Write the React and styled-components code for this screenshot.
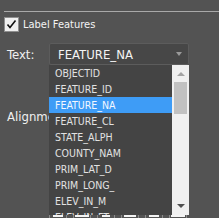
import React from 'react';
import styled, { createGlobalStyle } from 'styled-components';

const GlobalStyle = createGlobalStyle`
  html, body {
    margin: 0;
    padding: 0;
    background: #535353;
    overflow: hidden;
  }
`;

const fields = [
  'OBJECTID',
  'FEATURE_ID',
  'FEATURE_NA',
  'FEATURE_CL',
  'STATE_ALPH',
  'COUNTY_NAM',
  'PRIM_LAT_D',
  'PRIM_LONG_',
  'ELEV_IN_M',
  'ELEV_IN_FT'
];

const Panel = styled.div`
  width: 219px;
  height: 218px;
  padding-top: 11px;
  box-sizing: border-box;
  font-family: 'DejaVu Sans Condensed', 'DejaVu Sans', sans-serif;
  color: #f2f2f2;
  overflow: hidden;
`;

const Divider = styled.div`
  height: 1px;
  margin-left: 4px;
  background: #a9a9a9;
`;

const CheckRow = styled.label`
  display: flex;
  align-items: center;
  gap: 4px;
  margin: 5px 0 0 4px;
  font-size: 11px;
  color: #f4f4f4;
`;

const CheckBox = styled.span`
  width: 13px;
  height: 13px;
  border: 1px solid #8f8f8f;
  background: #f0f0f0;
  display: flex;
  align-items: center;
  justify-content: center;
`;

const FieldRow = styled.div`
  display: flex;
  align-items: center;
  margin-top: 11px;
`;

const FieldLabel = styled.span`
  width: 42px;
  padding-left: 7px;
  font-size: 13px;
  color: #f0f0f0;
`;

const SelectWrap = styled.div`
  position: relative;
  width: 140px;
`;

const SelectBox = styled.div`
  height: 20px;
  border: 1px solid #5c5c5c;
  border-radius: 2px;
  background: #474747;
  display: flex;
  align-items: center;
  justify-content: space-between;
  padding: 0 6px 0 8px;
  font-size: 13px;
  color: #f4f4f4;
`;

const Caret = styled.span`
  width: 0;
  height: 0;
  border-left: 3.5px solid transparent;
  border-right: 3.5px solid transparent;
  border-top: 4px solid #9a9a9a;
`;

const Dropdown = styled.div`
  position: absolute;
  top: 22px;
  left: 0;
  width: 140px;
  height: 150px;
  display: flex;
  background: #444444;
  z-index: 5;
`;

const List = styled.div`
  flex: 1;
  overflow: hidden;
`;

const Item = styled.div`
  height: 16px;
  line-height: 16px;
  padding-left: 6px;
  font-size: 10.5px;
  color: ${({ $active }) => ($active ? '#f4f8ff' : '#e2e2e2')};
  background: ${({ $active }) => ($active ? '#3e9cf6' : 'transparent')};
  white-space: nowrap;
`;

const ScrollBar = styled.div`
  width: 17px;
  background: #f0f0f0;
  display: flex;
  flex-direction: column;
  align-items: center;
`;

const ArrowUp = styled.span`
  margin-top: 7px;
  width: 0;
  height: 0;
  border-left: 4px solid transparent;
  border-right: 4px solid transparent;
  border-bottom: 4px solid #a3a3a3;
`;

const Thumb = styled.div`
  width: 13px;
  height: 32px;
  margin-top: 6px;
  background: #c1c1c1;
`;

const ArrowDown = styled.span`
  margin-top: auto;
  margin-bottom: 7px;
  width: 0;
  height: 0;
  border-left: 4px solid transparent;
  border-right: 4px solid transparent;
  border-top: 4px solid #505050;
`;

const AlignRow = styled.div`
  margin-top: 44px;
  padding-left: 7px;
  font-size: 13px;
  color: #f0f0f0;
`;

const IconRow = styled.div`
  display: flex;
  gap: 6px;
  margin: 86px 0 0 49px;
`;

const IconButton = styled.div`
  width: 18px;
  height: 18px;
  border: 1px solid #8a8a8a;
  display: flex;
  justify-content: center;
  padding-top: 3px;
  box-sizing: border-box;
`;

const IconBar = styled.span`
  width: ${({ $w }) => $w}px;
  height: 3px;
  background: #f4f4f4;
`;

export default function App() {
  return (
    <Panel>
      <GlobalStyle />
      <Divider />
      <CheckRow>
        <CheckBox>
          <svg width="11" height="11" viewBox="0 0 11 11">
            <path d="M1.5 5.5 L4 8.5 L9.5 1.5" fill="none" stroke="#111" strokeWidth="1.6" />
          </svg>
        </CheckBox>
        Label Features
      </CheckRow>
      <FieldRow>
        <FieldLabel>Text:</FieldLabel>
        <SelectWrap>
          <SelectBox>
            FEATURE_NA
            <Caret />
          </SelectBox>
          <Dropdown>
            <List>
              {fields.map((f) => (
                <Item key={f} $active={f === 'FEATURE_NA'}>
                  {f}
                </Item>
              ))}
            </List>
            <ScrollBar>
              <ArrowUp />
              <Thumb />
              <ArrowDown />
            </ScrollBar>
          </Dropdown>
        </SelectWrap>
      </FieldRow>
      <AlignRow>Alignment:</AlignRow>
      <IconRow>
        {[10, 14, 8, 12, 10, 14].map((w, i) => (
          <IconButton key={i}>
            <IconBar $w={w} />
          </IconButton>
        ))}
      </IconRow>
    </Panel>
  );
}
